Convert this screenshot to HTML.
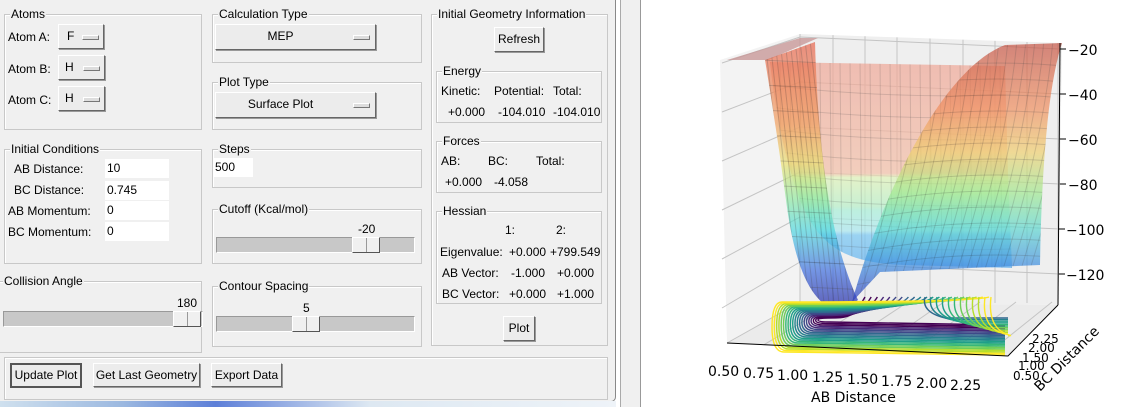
<!DOCTYPE html>
<html><head><meta charset="utf-8"><style>
*{margin:0;padding:0;box-sizing:border-box}
body{width:1124px;height:407px;overflow:hidden;background:#fff;font-family:"Liberation Sans",sans-serif;font-size:12px;color:#000;position:relative}
.win{position:absolute;left:0;top:0;width:616px;height:402px;background:#f0f0f0;border-right:1px solid #888;border-bottom:1px solid #888;border-bottom-right-radius:5px}
.a{position:absolute;white-space:nowrap}
.g{position:absolute;border:1px solid #c8c8c8;box-shadow:inset 1px 1px 0 #fff}
.g>.t{position:absolute;top:-8px;left:5px;background:#f0f0f0;padding:0 1px;line-height:14px}
.btn{position:absolute;background:#ececec;border:1px solid;border-color:#fff #666 #666 #fff;box-shadow:1px 1px 0 #999;text-align:center;line-height:22px}
.ind{position:absolute;width:17px;height:5px;border:1px solid;border-color:#fff #777 #777 #fff;background:#ddd}
.in{position:absolute;background:#fff;height:19px;line-height:19px;padding-left:2px}
.tr{position:absolute;height:16px;background:#c8c8c8;border:1px solid;border-color:#999 #fff #fff #999}
.th{position:absolute;top:-1px;height:16px;width:28px;background:#f0f0f0;border:1px solid;border-color:#fff #555 #555 #fff}
.th:after{content:"";position:absolute;left:13px;top:0;height:14px;border-left:1px solid #999}
</style></head><body>
<div class="win">
 <div class="g" style="left:4px;top:14px;width:198px;height:116px"><span class="t">Atoms</span></div>
 <div class="a" style="left:8px;top:30px">Atom A:</div>
 <div class="btn" style="left:58px;top:24px;width:46px;height:25px;text-align:left;padding-left:8px">F</div><div class="ind" style="left:82px;top:35px"></div>
 <div class="a" style="left:8px;top:62px">Atom B:</div>
 <div class="btn" style="left:58px;top:55px;width:47px;height:25px;text-align:left;padding-left:6px">H</div><div class="ind" style="left:83px;top:66px"></div>
 <div class="a" style="left:8px;top:93px">Atom C:</div>
 <div class="btn" style="left:58px;top:86px;width:47px;height:25px;text-align:left;padding-left:6px">H</div><div class="ind" style="left:83px;top:97px"></div>

 <div class="g" style="left:212px;top:14px;width:210px;height:49px"><span class="t">Calculation Type</span></div>
 <div class="btn" style="left:215px;top:24px;width:161px;height:26px;padding-right:30px">MEP</div><div class="ind" style="left:353px;top:35px"></div>
 <div class="g" style="left:212px;top:82px;width:210px;height:48px"><span class="t">Plot Type</span></div>
 <div class="btn" style="left:215px;top:92px;width:161px;height:26px;padding-right:30px">Surface Plot</div><div class="ind" style="left:353px;top:103px"></div>

 <div class="g" style="left:4px;top:149px;width:198px;height:115px"><span class="t">Initial Conditions</span></div>
 <div class="a" style="left:14px;top:162px">AB Distance:</div><div class="in" style="left:105px;top:159px;width:64px">10</div>
 <div class="a" style="left:14px;top:183px">BC Distance:</div><div class="in" style="left:105px;top:181px;width:64px">0.745</div>
 <div class="a" style="left:8px;top:204px">AB Momentum:</div><div class="in" style="left:105px;top:201px;width:64px">0</div>
 <div class="a" style="left:8px;top:225px">BC Momentum:</div><div class="in" style="left:105px;top:222px;width:64px">0</div>

 <div class="g" style="left:212px;top:149px;width:210px;height:39px"><span class="t">Steps</span></div>
 <div class="in" style="left:213px;top:158px;width:40px">500</div>
 <div class="g" style="left:212px;top:209px;width:210px;height:55px"><span class="t">Cutoff (Kcal/mol)</span></div>
 <div class="a" style="left:358px;top:222px">-20</div>
 <div class="tr" style="left:216px;top:237px;width:199px"><div class="th" style="left:135px"></div></div>

 <div class="g" style="left:-1px;top:281px;width:203px;height:72px;border-left:none"><span class="t" style="left:4px">Collision Angle</span></div>
 <div class="a" style="left:177px;top:296px">180</div>
 <div class="tr" style="left:3px;top:311px;width:200px"><div class="th" style="left:169px"></div></div>
 <div class="g" style="left:212px;top:286px;width:210px;height:61px"><span class="t">Contour Spacing</span></div>
 <div class="a" style="left:303px;top:301px">5</div>
 <div class="tr" style="left:216px;top:316px;width:199px"><div class="th" style="left:75px"></div></div>

 <div class="g" style="left:4px;top:357px;width:604px;height:43px"></div>
 <div class="btn" style="left:10px;top:363px;width:72px;height:25px;border:2px solid #555;box-shadow:none;line-height:21px">Update Plot</div>
 <div class="btn" style="left:93px;top:363px;width:107px;height:24px">Get Last Geometry</div>
 <div class="btn" style="left:211px;top:363px;width:71px;height:24px">Export Data</div>

 <div class="g" style="left:431px;top:14px;width:177px;height:332px"><span class="t">Initial Geometry Information</span></div>
 <div class="btn" style="left:494px;top:27px;width:50px;height:25px">Refresh</div>
 <div class="g" style="left:436px;top:71px;width:166px;height:52px"><span class="t">Energy</span></div>
 <div class="a" style="left:441px;top:84px">Kinetic:</div><div class="a" style="left:494px;top:84px">Potential:</div><div class="a" style="left:553px;top:84px">Total:</div>
 <div class="a" style="left:448px;top:105px">+0.000</div><div class="a" style="left:498px;top:105px">-104.010</div><div class="a" style="left:553px;top:105px">-104.010</div>
 <div class="g" style="left:436px;top:141px;width:166px;height:52px"><span class="t">Forces</span></div>
 <div class="a" style="left:441px;top:154px">AB:</div><div class="a" style="left:488px;top:154px">BC:</div><div class="a" style="left:536px;top:154px">Total:</div>
 <div class="a" style="left:445px;top:175px">+0.000</div><div class="a" style="left:494px;top:175px">-4.058</div>
 <div class="g" style="left:436px;top:211px;width:166px;height:93px"><span class="t">Hessian</span></div>
 <div class="a" style="left:505px;top:223px">1:</div><div class="a" style="left:556px;top:223px">2:</div>
 <div class="a" style="left:440px;top:245px">Eigenvalue:</div><div class="a" style="left:509px;top:245px">+0.000</div><div class="a" style="left:550px;top:245px">+799.549</div>
 <div class="a" style="left:442px;top:266px">AB Vector:</div><div class="a" style="left:511px;top:266px">-1.000</div><div class="a" style="left:557px;top:266px">+0.000</div>
 <div class="a" style="left:442px;top:287px">BC Vector:</div><div class="a" style="left:509px;top:287px">+0.000</div><div class="a" style="left:557px;top:287px">+1.000</div>
 <div class="btn" style="left:503px;top:316px;width:32px;height:25px">Plot</div>
</div>
<div class="a" style="left:0;top:401px;width:616px;height:6px;background:linear-gradient(90deg,#cfe0ee,#9bb8e0 20%,#5d7fd8 35%,#dde8f2 60%,#eef3f8)"></div>
<div class="a" style="left:620px;top:0;width:21px;height:407px;background:#f0f0f0;border-left:1px solid #aaa;border-right:1px solid #999"></div>
<svg class="a" style="left:0;top:0" width="1124" height="407" viewBox="0 0 1124 407">
<defs>
<linearGradient id="gA" gradientUnits="userSpaceOnUse" x1="0" y1="45" x2="0" y2="310"><stop offset="0" stop-color="#e86850"/><stop offset=".3" stop-color="#f0a060"/><stop offset=".45" stop-color="#e8e070"/><stop offset=".58" stop-color="#90e8a0"/><stop offset=".7" stop-color="#50d8e0"/><stop offset=".85" stop-color="#4070e0"/><stop offset="1" stop-color="#2020a0"/></linearGradient>
<linearGradient id="gP" gradientUnits="userSpaceOnUse" x1="0" y1="62" x2="0" y2="268"><stop offset="0" stop-color="#f0a898"/><stop offset=".54" stop-color="#f4c0a8"/><stop offset=".56" stop-color="#e0f4b8"/><stop offset=".7" stop-color="#b8f0c8"/><stop offset=".72" stop-color="#a8f0d8"/><stop offset=".82" stop-color="#a8e8f0"/><stop offset=".84" stop-color="#78c8f4"/><stop offset="1" stop-color="#60b0f0"/></linearGradient>
<linearGradient id="gR" gradientUnits="userSpaceOnUse" x1="0" y1="45" x2="0" y2="300"><stop offset="0" stop-color="#c85848"/><stop offset=".25" stop-color="#f09060"/><stop offset=".42" stop-color="#f0d070"/><stop offset=".58" stop-color="#a0e890"/><stop offset=".72" stop-color="#60d8d0"/><stop offset=".86" stop-color="#4090e0"/><stop offset="1" stop-color="#3040c0"/></linearGradient>
<clipPath id="cP"><path id="pP" d="M770,62 L1005,66 L1008,175 L1012,268 L905,265 C850,263 820,250 800,200 C785,160 775,110 770,62Z"/></clipPath>
<clipPath id="cA"><path d="M765,60 L815,42 C818,150 830,240 858,300 L840,312 C812,305 795,270 786,200 C778,140 770,90 765,60Z"/></clipPath>
<clipPath id="cR"><path d="M852,302 C880,200 940,70 1005,45 L1062,43 C1050,80 1042,150 1040,265 L880,272 Z"/></clipPath>
</defs>
<polygon points="720,60 800,34 800,302 727,343" fill="#f3f3f3"/>
<polygon points="800,34 1062,43 1058,305 800,302" fill="#efefef"/>
<polygon points="727,343 800,302 1058,305 1008,356" fill="#ebebeb"/>
<g id="grid" stroke="#c4c4c4" stroke-width="1" fill="none"></g>
<polygon points="727,60 800,38 818,38 768,60" fill="#c89898" opacity=".8"/>
<g clip-path="url(#cP)" opacity=".7"><rect x="760" y="55" width="260" height="220" fill="url(#gP)"/><g id="mP" stroke="#000" stroke-opacity=".18" fill="none"></g></g>
<g clip-path="url(#cA)" opacity=".7"><rect x="760" y="40" width="110" height="280" fill="url(#gA)"/><g id="mA" stroke="#000" stroke-opacity=".25" fill="none"></g></g>
<g clip-path="url(#cR)" opacity=".7"><rect x="840" y="40" width="230" height="270" fill="url(#gR)"/><g id="mR" stroke="#000" stroke-opacity=".2" fill="none"></g></g>
<g id="ct" fill="none" stroke-width="1.4"></g>
<g stroke="#000" stroke-width="1" fill="none"><path d="M727,343 L1008,356 L1058,305"/><path d="M1060,43 L1058,305"/>
<path d="M1060,49h6M1060,94h6M1060,139h6M1060,184h6M1059,229h6M1059,274h6"/></g>
<g font-family="DejaVu Sans,sans-serif" font-size="14" fill="#000">
<text x="1068" y="55">−20</text><text x="1068" y="100">−40</text><text x="1068" y="145">−60</text><text x="1068" y="190">−80</text><text x="1066" y="235">−100</text><text x="1066" y="280">−120</text>
<text x="708" y="376">0.50</text><text x="743" y="378">0.75</text><text x="777" y="380">1.00</text><text x="812" y="382">1.25</text><text x="847" y="384">1.50</text><text x="881" y="386">1.75</text><text x="916" y="388">2.00</text><text x="950" y="390">2.25</text>
<text x="811" y="402">AB Distance</text>
<text x="1040" y="392" transform="rotate(-45 1040 392)">BC Distance</text>
<text x="1013" y="380" font-size="12">0.50</text><text x="1018" y="370" font-size="12">1.00</text><text x="1022" y="362" font-size="12">1.50</text><text x="1028" y="352" font-size="12">2.00</text><text x="1032" y="343" font-size="12">2.25</text>
</g>
</svg>
<script>
var g=document.getElementById('grid'),s='';
[800,833,865,897,930,963,995,1027,1058].forEach(function(x){s+='<path d="M'+x+','+(34+(x-800)*0.035)+' L'+x+',303"/>';});
for(var i=0;i<6;i++){var y=49+i*45;s+='<path d="M800,'+(y-12)+' L1060,'+y+'"/><path d="M722,'+(y+14+i*4)+' L800,'+(y-12)+'"/>';}
for(var i=0;i<8;i++){var x=727+i*37;s+='<path d="M'+x+','+(343+i*1.7)+' L'+(800+i*36)+',302"/>';}
g.innerHTML=s;
var m='';for(var x=770;x<1015;x+=10)m+='<path d="M'+x+',60 L'+(x+2)+',275"/>';
for(var y=95;y<270;y+=22)m+='<path d="M770,'+(y-10)+' Q880,'+(y+4)+' 1012,'+y+'"/>';
document.getElementById('mP').innerHTML=m;
m='';for(var x=760;x<870;x+=5)m+='<path d="M'+x+',40 L'+(x+30)+',312"/>';
for(var y=60;y<310;y+=25)m+='<path d="M760,'+y+' L870,'+(y+5)+'"/>';
document.getElementById('mA').innerHTML=m;
m='';for(var x=840;x<1070;x+=9)m+='<path d="M'+x+',300 Q'+(x+50)+',150 '+(x+60)+',40"/>';
for(var y=60;y<300;y+=16)m+='<path d="M840,'+(y+20)+' Q950,'+(y-4)+' 1065,'+(y+6)+'"/>';
document.getElementById('mR').innerHTML=m;
var vir=['#440154','#482878','#3e4989','#31688e','#26828e','#1f9e89','#35b779','#6ece58','#b5de2b','#fde725'];
function col(t){return vir[Math.min(9,Math.floor(t*9.99))];}
var c='',N=20;
for(var k=0;k<=N;k++){var t=k/N;var sx=865+k*6.2,tx=818-t*46,ty=318-t*16,by=322+t*30;
c+='<path stroke="'+col(t)+'" d="M'+sx+',297 C'+(sx-12)+','+ty+' '+(tx+30)+','+ty+' '+(tx+10)+','+ty+' Q'+tx+','+ty+' '+tx+','+((ty+by)/2)+' Q'+tx+','+by+' '+(tx+12)+','+by+' L1005,'+(by+3)+'"/>';}
for(var k=0;k<12;k++){var t=k/11;var y=318+k*1.6;c+='<path stroke="'+col(0.4+t*0.6)+'" d="M'+(925+k*6)+',297 Q'+(925+k*6-4)+','+(y-6)+' '+(945+k*6)+','+y+' L1008,'+y+'"/>';}
document.getElementById('ct').innerHTML=c;
</script>
</body></html>
